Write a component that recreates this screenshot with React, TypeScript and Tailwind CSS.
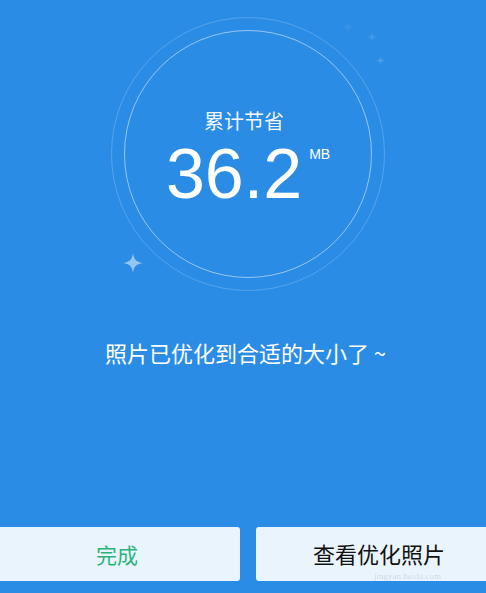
import React from 'react';

const Sparkle: React.FC<{ size: number; className?: string }> = ({ size, className }) => (
    <svg width={size} height={size} viewBox="0 0 20 20" className={className}>
        <path d="M10 0 C10.8 6.5 13.5 9.2 20 10 C13.5 10.8 10.8 13.5 10 20 C9.2 13.5 6.5 10.8 0 10 C6.5 9.2 9.2 6.5 10 0 Z" fill="currentColor" />
    </svg>
);

const App: React.FC = () => {
    return (
        <div
            className="relative w-[486px] h-[593px] overflow-hidden bg-[#2b8ce6] flex flex-col"
            style={{ fontFamily: '"Noto Sans CJK SC", Roboto, sans-serif' }}
        >
            {/* decorative sparkles */}
            <Sparkle size={20} className="absolute left-[123px] top-[253px] text-white/50" />
            <Sparkle size={12} className="absolute left-[342px] top-[21px] text-white/[0.06]" />
            <Sparkle size={10} className="absolute left-[367px] top-[32px] text-white/10" />
            <Sparkle size={9} className="absolute left-[376px] top-[56px] text-white/15" />

            {/* ring */}
            <div className="flex justify-center pl-[10px] pt-[17px]">
                <div className="w-[274px] h-[274px] rounded-full border border-white/20 flex items-center justify-center">
                    <div className="w-[248px] h-[248px] rounded-full border-[1.5px] border-white/50 flex flex-col items-center justify-start pt-[75px]">
                        <div className="text-white/95 text-[20px] leading-[29px] -ml-[8px]">累计节省</div>
                        <div className="flex items-start">
                            <span className="text-white text-[70px] leading-[78px]" style={{ fontFamily: '"Liberation Sans", Arial, sans-serif' }}>36.2</span>
                            <span className="text-white text-[14px] leading-none mt-[12px] ml-[7px]" style={{ fontFamily: '"Liberation Sans", Arial, sans-serif' }}>MB</span>
                        </div>
                    </div>
                </div>
            </div>

            {/* message */}
            <div className="mt-[46px] text-center text-white text-[22px] leading-[30px] pl-[5px]">照片已优化到合适的大小了 ~</div>

            {/* buttons */}
            <div className="mt-auto mb-[12px] -ml-[6px] w-[508px] flex gap-4">
                <button className="flex-1 h-[54px] rounded-[3px] bg-[#eaf4fd] text-[#2bb47a] text-[21px] leading-none">完成</button>
                <button className="relative flex-1 h-[54px] pb-[3px] rounded-[3px] bg-[#eaf4fd] text-[#111] text-[22px] leading-none">
                    查看优化照片
                    <span className="absolute left-[118px] bottom-0 text-[9px] leading-none text-black/15" style={{ fontFamily: '"Liberation Serif", serif' }}>jingyan.baidu.com</span>
                </button>
            </div>
        </div>
    );
};

export default App;
